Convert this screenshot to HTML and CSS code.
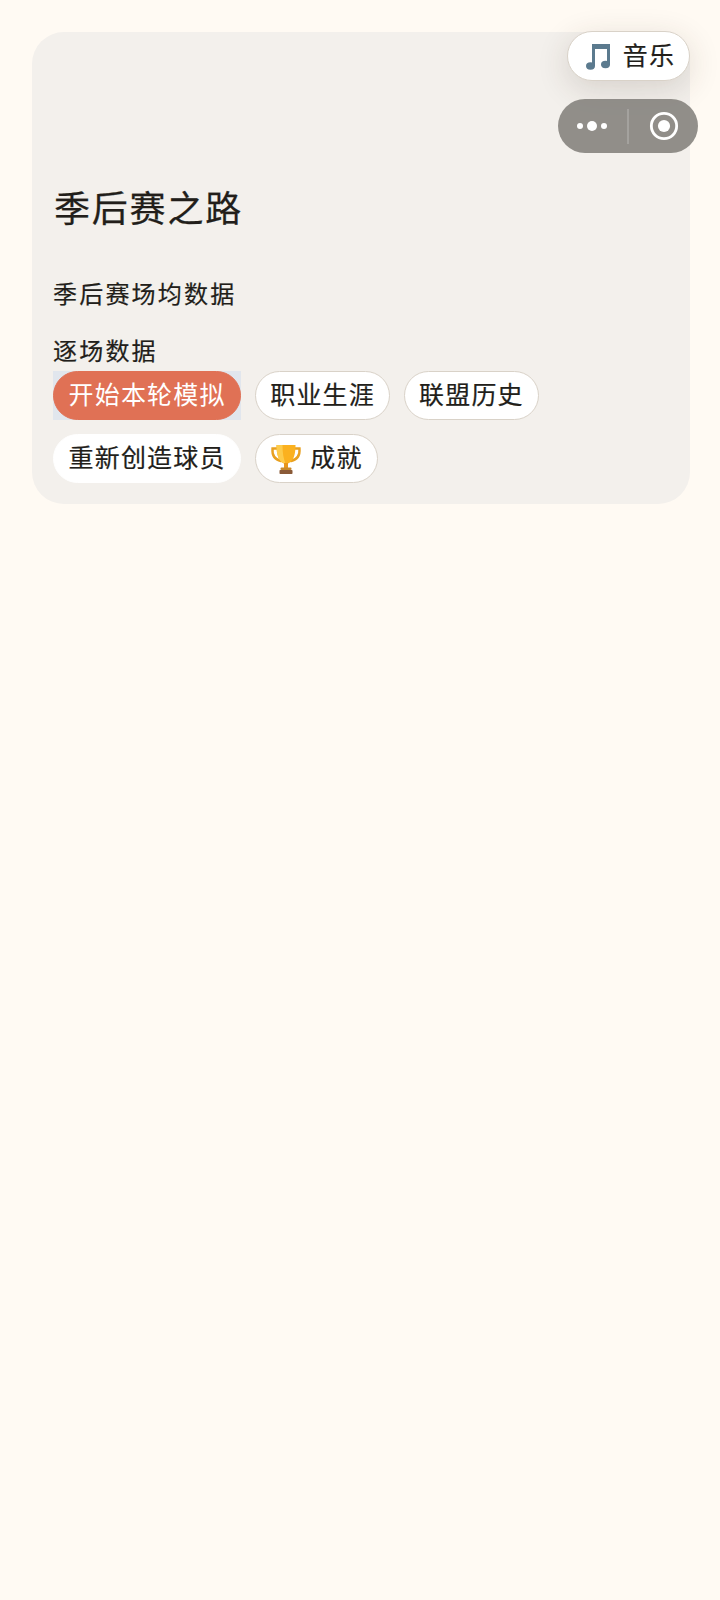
FILE: index.html
```html
<!DOCTYPE html>
<html lang="zh">
<head>
<meta charset="utf-8">
<title>季后赛之路</title>
<link rel="stylesheet" href="styles.css">
</head>
<body>
<main class="card">
  <h1 class="title">季后赛之路</h1>
  <h2 class="sub sub-first">季后赛场均数据</h2>
  <h2 class="sub sub-second">逐场数据</h2>
  <div class="actions">
    <span class="hl"><button class="btn btn-primary"><span class="lbl">开始本轮模拟</span></button></span>
    <button class="btn"><span class="lbl">职业生涯</span></button>
    <button class="btn"><span class="lbl">联盟历史</span></button>
    <button class="btn btn-plain"><span class="lbl">重新创造球员</span></button>
    <button class="btn btn-icon">
      <svg class="trophy" viewBox="0 0 32 32" aria-hidden="true">
        <path d="M8 5.500H2.500C2 11.500 4.500 16.500 11 18" fill="none" stroke="#e8a020" stroke-width="2.400" stroke-linecap="round"/>
        <path d="M24 5.500h5.500C30 11.500 27.500 16.500 21 18" fill="none" stroke="#e8a020" stroke-width="2.400" stroke-linecap="round"/>
        <path d="M6.500 2h19c0 10-2 16-7.500 18.500h-4C8.500 18 6.500 12 6.500 2z" fill="#fbb11f"/>
        <path d="M6.500 2h6c0 8 1 14 3 18.500H14C8.500 18 6.500 12 6.500 2z" fill="#fdcb4b"/>
        <rect x="14" y="20" width="4" height="5" fill="#e8961a"/>
        <rect x="10.500" y="24.500" width="11" height="2.500" rx="1" fill="#c98a2a"/>
        <rect x="9.500" y="27" width="13" height="4" rx=".8" fill="#8a5a38"/>
      </svg>
      <span class="lbl">成就</span>
    </button>
  </div>
</main>
<button class="music">
  <svg class="note" viewBox="0 0 24 27" aria-hidden="true">
    <path d="M6 1h18v21h-3V6H9v17H6z" fill="#5b7a8e"/>
    <ellipse cx="4.500" cy="23" rx="4.500" ry="3.700" fill="#5b7a8e"/>
    <ellipse cx="19.500" cy="21.500" rx="4.500" ry="3.700" fill="#5b7a8e"/>
  </svg>
  <span class="lbl">音乐</span>
</button>
<div class="capsule">
  <div class="cap-side cap-left">
    <svg class="dots" viewBox="0 0 32 12" aria-hidden="true">
      <circle cx="4" cy="6" r="3" fill="#fff"/><circle cx="16" cy="6" r="5" fill="#fff"/><circle cx="28" cy="6" r="3" fill="#fff"/>
    </svg>
  </div>
  <i class="cap-line"></i>
  <div class="cap-side cap-right">
    <svg class="target" viewBox="0 0 32 32" aria-hidden="true">
      <circle cx="16" cy="16" r="13.500" fill="none" stroke="#fff" stroke-width="3"/><circle cx="16" cy="16" r="6.500" fill="#fff"/>
    </svg>
  </div>
</div>
</body>
</html>
```
FILE: styles.css
```css
* { box-sizing: border-box; }
html, body { margin: 0; height: 100%; }
body {
  background: #fffaf3;
  padding: 32px 30px 0 32px;
  font-family: "Noto Sans CJK SC", "Noto Sans", sans-serif;
  color: #221e1a;
  min-height: 1600px;
  position: relative;
}
.card {
  width: 658px;
  background: #f3f0ec;
  border-radius: 32px;
  padding: 150px 21px 21px;
}
.title {
  margin: 0 0 0 1px;
  font-size: 36px;
  font-weight: 400;
  line-height: 48px;
  letter-spacing: 1.8px;
  -webkit-text-stroke: .25px currentColor;
}
.sub {
  margin: 0;
  font-size: 24px;
  font-weight: 400;
  line-height: 34px;
  letter-spacing: 2.2px;
  -webkit-text-stroke: .2px currentColor;
}
.sub-first { margin-top: 46px; }
.sub-second { margin-top: 23px; }
.actions {
  display: flex;
  flex-wrap: wrap;
  gap: 14px;
  margin-top: 4px;
}
.hl { display: block; background: #e1e6ed; height: 49px; }
.btn {
  height: 49px;
  padding: 0 14px;
  border: 1.500px solid #d9d2c8;
  border-radius: 25px;
  background: #fff;
  color: #221e1a;
  font: inherit;
  font-size: 25px;
  line-height: 1;
  letter-spacing: 1.2px;
  display: flex;
  align-items: center;
  gap: 8px;
  white-space: nowrap;
}
.lbl { position: relative; top: -2px; -webkit-text-stroke: .2px currentColor; }
.btn-primary { padding: 0 14.500px; background: #e07155; border-color: #e07155; color: #fff; }
.btn-primary .lbl { -webkit-text-stroke: 0; }
.btn-plain { padding: 0 14.500px; border-color: #fff; }
.trophy { width: 32px; height: 32px; flex: none; }
.music {
  position: absolute;
  left: 567px;
  top: 31px;
  width: 123px;
  height: 50px;
  border: 1.500px solid #d9d2c8;
  border-radius: 25px;
  background: #fff;
  box-shadow: 0 8px 32px rgba(60, 45, 30, .16);
  color: #221e1a;
  font: inherit;
  font-size: 25px;
  line-height: 1;
  letter-spacing: 1.2px;
  display: flex;
  align-items: center;
  justify-content: center;
  gap: 13px;
  padding: 0 0 0 4px;
}
.note { width: 24px; height: 27px; flex: none; }
.capsule {
  position: absolute;
  left: 558px;
  top: 99px;
  width: 140px;
  height: 54px;
  border-radius: 27px;
  background: rgba(120, 117, 113, .8);
  display: flex;
  align-items: center;
}
.cap-side { display: flex; align-items: center; justify-content: center; }
.cap-left { width: 69px; padding-right: 2px; }
.cap-right { flex: 1; }
.cap-line { width: 2px; height: 35px; background: rgba(255, 255, 255, .18); flex: none; }
.dots { width: 32px; height: 12px; }
.target { width: 30px; height: 30px; }
```
